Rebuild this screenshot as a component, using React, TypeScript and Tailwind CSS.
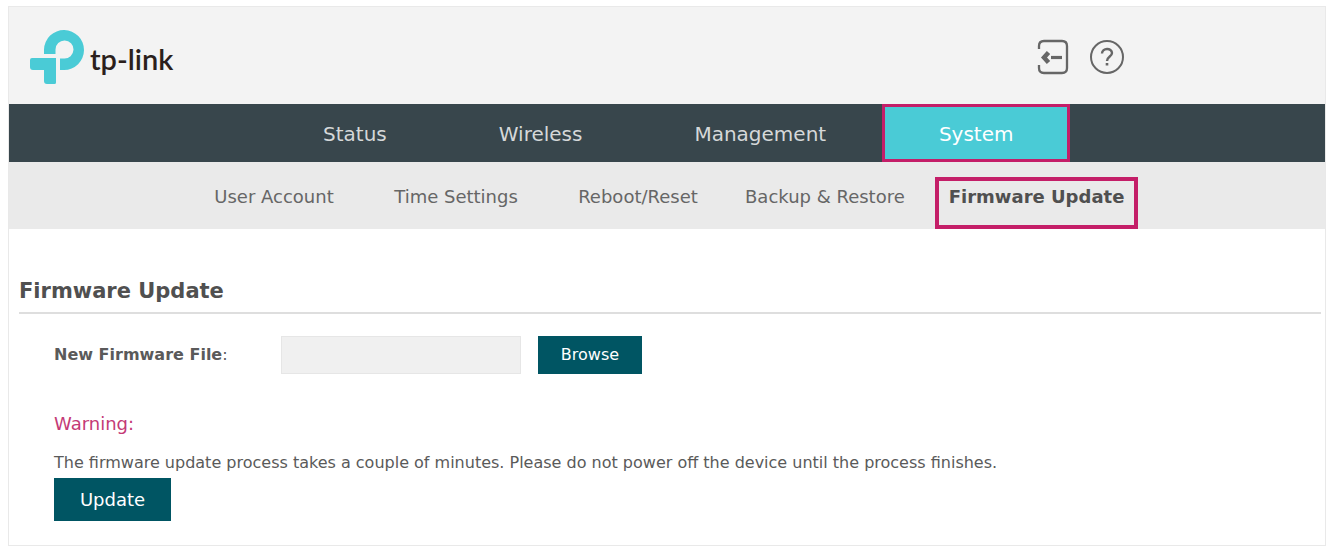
import React from "react";

const mainTabs = ["Status", "Wireless", "Management"];
const systemPages = ["User Account", "Time Settings", "Reboot/Reset"];

function Logo() {
  return (
    <a href="#home" className="flex items-center gap-[6px] text-[#2b1f1c]">
      <svg width="54" height="56" viewBox="0 0 54 56" fill="#4acbd6" aria-hidden="true">
        <path d="M14 25V20.500A20 20 0 1 1 34 41H30V29.500H34A9 9 0 1 0 25.500 20.500V25Z" />
        <path d="M2 29H26V53.500Q26 55 24.500 55H17Q14 55 14 52V41H3Q0 41 0 38V31Q0 29 2 29Z" />
      </svg>
      <span className="pt-1 font-['Lato',sans-serif] text-[29px] leading-8 font-semibold">tp-link</span>
    </a>
  );
}

function LogoutIcon() {
  return (
    <svg width="32" height="36" viewBox="0 0 32 36" fill="none" stroke="#666" strokeWidth="2.300" aria-hidden="true">
      <path d="M2 10V7Q2 2 7 2H25Q30 2 30 7V29Q30 34 25 34H7Q2 34 2 29V26" />
      <path d="M14 18.500H25" strokeWidth="3.200" />
      <path d="M11.500 13.500L7 18.500L11.500 23.500" strokeWidth="4.500" />
    </svg>
  );
}

function HelpIcon() {
  return (
    <svg width="36" height="36" viewBox="0 0 36 36" fill="none" stroke="#666" strokeWidth="2" aria-hidden="true">
      <circle cx="18" cy="18" r="16" />
      <path d="M13 14.500C13 8.500 23 8.500 23 14C23 17.500 18 17.500 18 22" strokeWidth="2.400" />
      <path d="M18 24V26.500" strokeWidth="2.600" />
    </svg>
  );
}

export default function App() {
  return (
    <div className="bg-white pt-[6px] pr-[2px] pb-1 pl-2 font-['DejaVu_Sans',sans-serif] text-[#5a5a5a]">
      <div className="border border-[#e9e9e9]">
        <header className="flex h-[97px] items-center justify-between bg-[#f3f3f3] pt-[2px] pr-[200px] pl-[21px]">
          <Logo />
          <div className="flex gap-5">
            <button type="button" aria-label="Log out">
              <LogoutIcon />
            </button>
            <button type="button" aria-label="Help">
              <HelpIcon />
            </button>
          </div>
        </header>

        <nav aria-label="Main" className="flex h-[58px] bg-[#38464c] pl-[258px] text-[20px] text-[#d5d8d9]">
          {mainTabs.map((tab) => (
            <a key={tab} href="#" className="flex items-center px-14 pt-[2px]">
              {tab}
            </a>
          ))}
          <a
            href="#system"
            aria-current="page"
            className="flex w-[188px] items-center justify-center border-[3px] border-[#c41e68] bg-[#4acbd6] pt-[2px] text-white"
          >
            System
          </a>
        </nav>

        <nav aria-label="System" className="flex h-[67px] bg-[#eaeaea] pl-[174px] text-[18px] text-[#666]">
          {systemPages.map((page) => (
            <a key={page} href="#" className="flex w-[182px] items-center justify-center pt-[2px]">
              {page}
            </a>
          ))}
          <a href="#" className="flex items-center px-4 pt-[2px]">
            Backup &amp; Restore
          </a>
          <a
            href="#firmware"
            aria-current="page"
            className="mt-[15px] ml-[14px] flex border-4 border-[#c41e68] px-[10px] pt-[2px] font-bold text-[#505050]"
          >
            Firmware Update
          </a>
        </nav>

        <main className="pr-1 pb-6 pl-[10px]">
          <h1 className="border-b-2 border-[#dedede] pt-12 pb-[7px] text-[21px] leading-7 font-bold text-[#505050]">
            Firmware Update
          </h1>
          <div className="pl-[35px]">
            <div className="flex items-center pt-[22px]">
              <label htmlFor="firmware-file" className="w-[227px] text-[16px] font-bold">
                New Firmware File<span className="font-normal">:</span>
              </label>
              <input
                id="firmware-file"
                type="text"
                readOnly
                className="h-[38px] w-[240px] border border-[#e6e6e6] bg-[#f0f0f0] px-2"
              />
              <button type="button" className="ml-[17px] h-[38px] w-[104px] bg-[#005563] text-[16px] text-white">
                Browse
              </button>
            </div>
            <h2 className="pt-[38px] text-[18px] leading-6 text-[#c43a76]">Warning:</h2>
            <p className="pt-[15px] text-[16px] leading-6">
              The firmware update process takes a couple of minutes. Please do not power off the device until the process
              finishes.
            </p>
            <button type="button" className="mt-[3px] h-[43px] w-[117px] bg-[#005563] text-[18px] text-white">
              Update
            </button>
          </div>
        </main>
      </div>
    </div>
  );
}
